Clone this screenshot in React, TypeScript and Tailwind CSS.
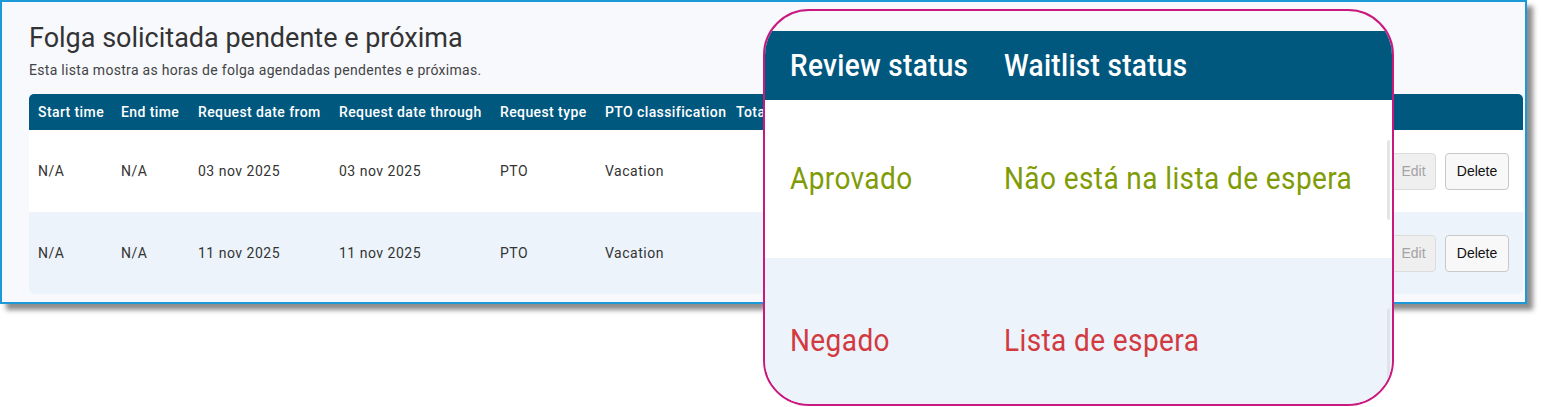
const headers = [
  { label: "Start time", w: "w-[83px]" },
  { label: "End time", w: "w-[77px]" },
  { label: "Request date from", w: "w-[141px]" },
  { label: "Request date through", w: "w-[161px]" },
  { label: "Request type", w: "w-[105px]" },
  { label: "PTO classification", w: "w-[131px]" },
  { label: "Total hours", w: "w-[120px]" },
];

const rows = [
  ["N/A", "N/A", "03 nov 2025", "03 nov 2025", "PTO", "Vacation", ""],
  ["N/A", "N/A", "11 nov 2025", "11 nov 2025", "PTO", "Vacation", ""],
];

function Actions() {
  return (
    <div className="ml-auto flex items-center gap-[9px] pr-[14px] font-['Liberation_Sans',Arial,sans-serif] text-[14px] tracking-normal">
      <button
        disabled
        className="h-[37px] w-[45px] rounded-[4px] border border-[#dcdcdc] bg-[#efefef] text-[#a3a3a3]"
      >
        Edit
      </button>
      <button className="h-[37px] w-[64px] rounded-[4px] border border-[#c8c8c8] bg-[#f8f8f8] text-[#111]">
        Delete
      </button>
    </div>
  );
}

export default function App() {
  return (
    <div className="relative h-[407px] w-[1542px] overflow-hidden bg-white font-['Roboto',sans-serif]">
      {/* main panel */}
      <div className="w-[1527px] h-[304px] border-2 border-[#1b9ad7] bg-[#f7f9fd] px-[27px] pt-[20px] shadow-[6px_6px_5px_rgba(0,0,0,0.45)]">
        <h1 className="text-[27px] leading-[32px] text-[#333]">Folga solicitada pendente e próxima</h1>
        <p className="mt-[6px] text-[14px] leading-[20px] tracking-[0.3px] text-[#444]">
          Esta lista mostra as horas de folga agendadas pendentes e próximas.
        </p>

        <div className="mt-[14px] w-[1494px] overflow-hidden rounded-[5px]">
          <div className="flex h-[36px] items-center bg-[#00587f] pl-[9px] text-[14px] font-medium tracking-[0.4px] text-white">
            {headers.map((h) => (
              <div key={h.label} className={`${h.w} whitespace-nowrap`}>
                {h.label}
              </div>
            ))}
          </div>
          {rows.map((r, i) => (
            <div
              key={i}
              className={
                i === 0
                  ? "flex h-[82px] items-center bg-white pl-[9px] text-[14px] tracking-[0.5px] text-[#333]"
                  : "flex h-[82px] items-center bg-[#ecf3fb] pl-[9px] text-[14px] tracking-[0.5px] text-[#333]"
              }
            >
              {r.map((c, j) => (
                <div key={j} className={`${headers[j].w} whitespace-nowrap`}>
                  {c}
                </div>
              ))}
              <Actions />
            </div>
          ))}
        </div>
      </div>

      {/* magnified callout */}
      <div className="absolute left-[763px] top-[9px] flex h-[397px] w-[631px] flex-col overflow-hidden rounded-[46px] border-2 border-[#c9197f] bg-[#f7f9fd]">
        <div className="h-[20px] shrink-0" />
        <div className="flex h-[69px] shrink-0 items-center bg-[#00587f] pl-[25px] text-[28px] font-medium tracking-[0.3px] text-white">
          <div className="w-[214px] scale-y-110 whitespace-nowrap origin-left">Review status</div>
          <div className="scale-y-110 whitespace-nowrap">Waitlist status</div>
        </div>
        <div className="relative flex h-[158px] shrink-0 items-center bg-white pl-[25px] text-[28px] tracking-[0.4px] text-[#7f9c06]">
          <div className="w-[214px] scale-y-110 whitespace-nowrap origin-left">Aprovado</div>
          <div className="scale-y-110 whitespace-nowrap">Não está na lista de espera</div>
          <div className="absolute right-[2px] top-[40px] h-[80px] w-[3px] rounded-l bg-[#e4e4e4]" />
        </div>
        <div className="relative flex flex-1 items-start bg-[#ecf3fb] pl-[25px] pt-[62px] text-[28px] tracking-[0.4px] text-[#d23a3f]">
          <div className="w-[214px] scale-y-110 whitespace-nowrap origin-left">Negado</div>
          <div className="scale-y-110 whitespace-nowrap">Lista de espera</div>
          <div className="absolute right-[2px] top-[50px] h-[90px] w-[3px] rounded-l bg-[#e0e4ea]" />
        </div>
      </div>
    </div>
  );
}
